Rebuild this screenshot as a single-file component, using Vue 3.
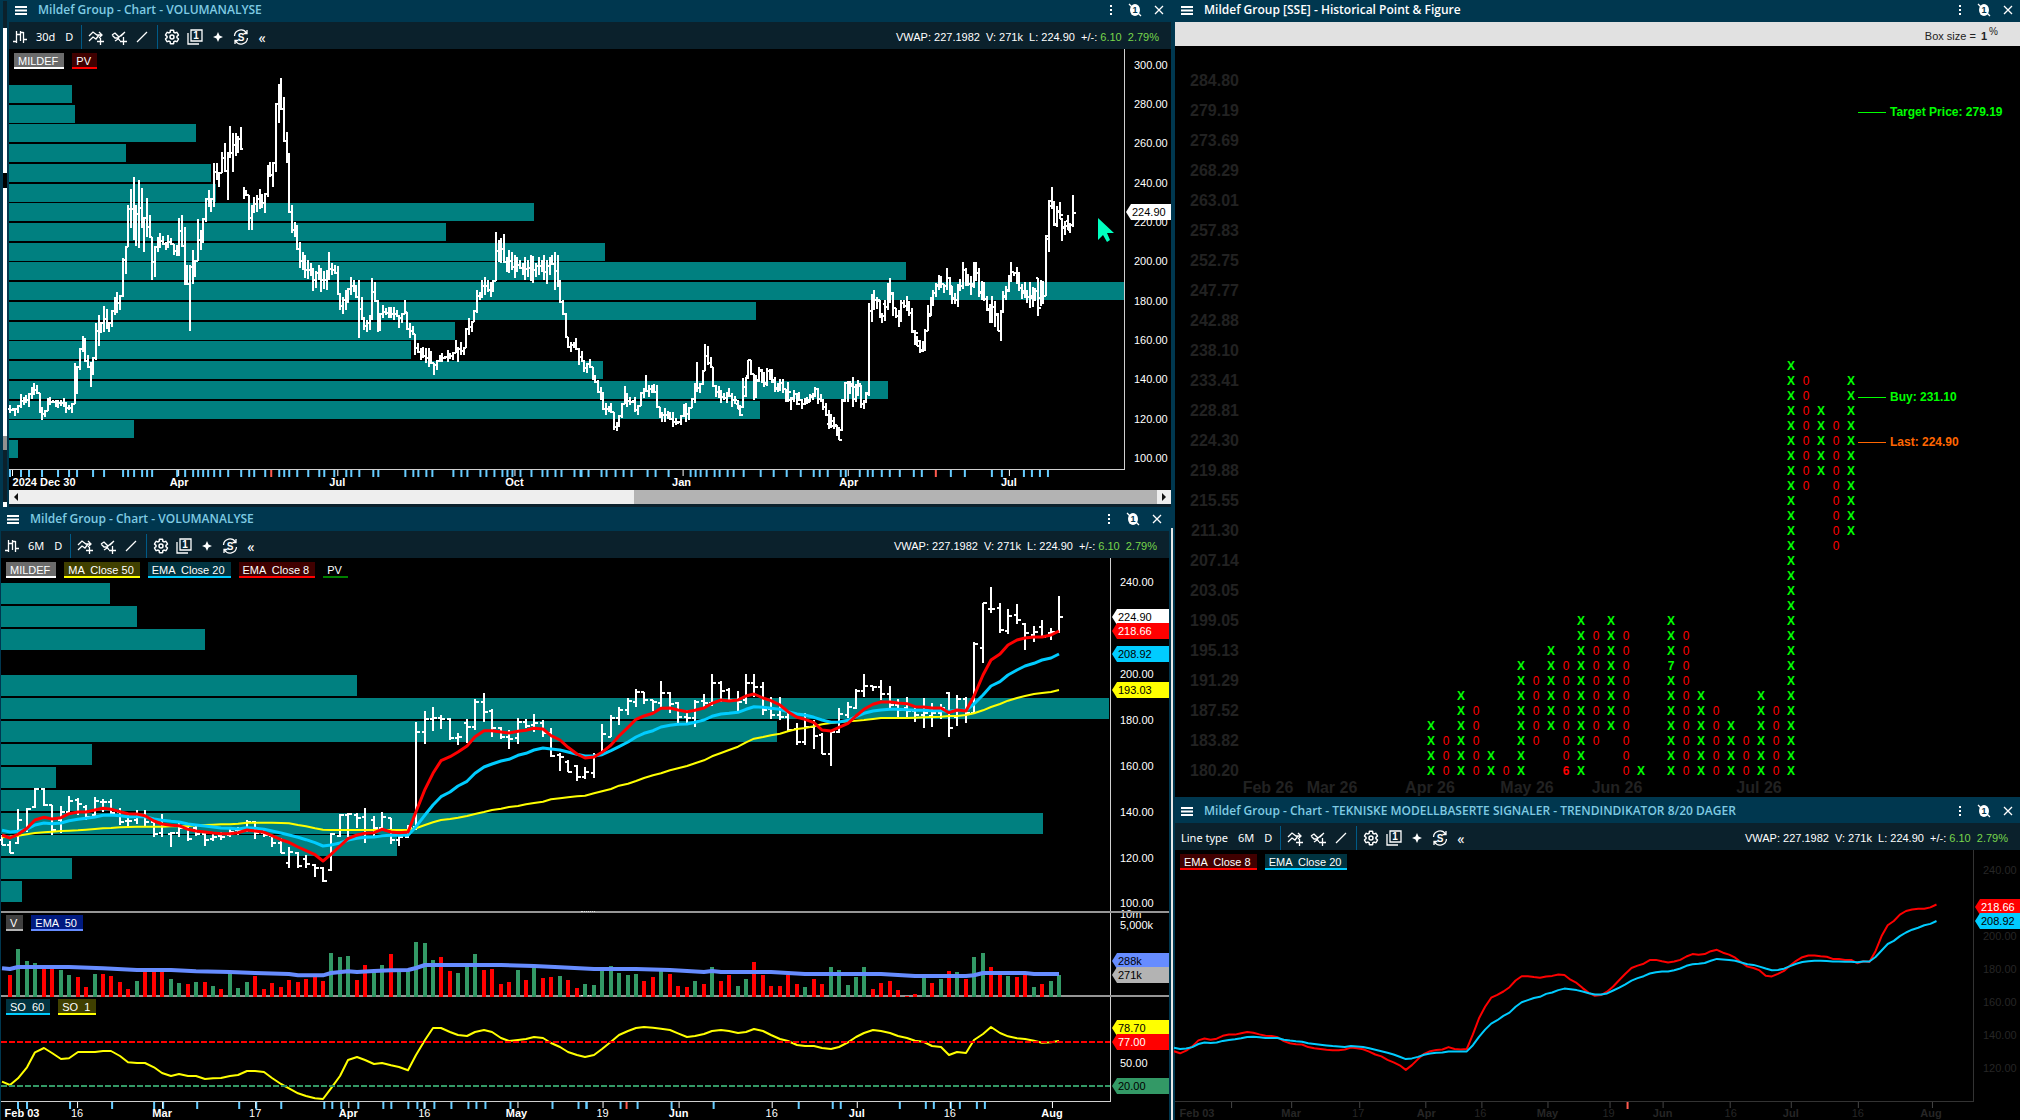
<script setup>
const quote = { vwap: '227.1982', volume: '271k', last: '224.90', change: '6.10', pct: '2.79%' }

const columns = [
  [
    { id: 'history', title: 'Mildef Group - Chart - VOLUMANALYSE', range: '30d' },
    { id: 'half', title: 'Mildef Group - Chart - VOLUMANALYSE', range: '6M' }
  ],
  [
    { id: 'pf', title: 'Mildef Group [SSE] - Historical Point & Figure' },
    { id: 'trend', title: 'Mildef Group - Chart - TEKNISKE MODELLBASERTE SIGNALER - TRENDINDIKATOR 8/20 DAGER', range: '6M', lineType: true }
  ]
]

const nums = (s) => s.trim().split(/\s+/).map(Number)

// ---- raw series, one entry per trading day ----
// high low open close, in sample units
const raw = `1005 1035 1020 1035,1022 1060 1035 1058,928 1032 1030 960,925 995 990 927,865 925 922 866,865 918 866 915,915 1005 915 990,918 998 960 937,888 940 935 902,895 945 900 912,
915 960 920 950,892 955 945 903,898 935 905 907,898 945 907 940,925 975 935 965,945 978 962 963,930 972 960 945,930 980 945 965,965 1010 965 1003,942 1012 1000 975,
995 1040 1003 1000,968 1012 998 985,980 1022 985 1018,975 1008 985 1003,1000 1037 1003 1020,998 1022 1018 1010,995 1020 1008 1010,982 1010 1005 995,980 1005 990 992,960 995 985 965,
962 1018 965 1000,985 1012 1000 1005,1005 1040 1008 1030,1015 1060 1030 1058,1040 1105 1090 1057,1057 1103 1060 1097,1065 1105 1078 1092,1092 1132 1095 1105,1100 1145 1105 1143,1000 1112 1110 1003,
942 1010 1008 945,938 1010 945 942,938 985 945 955,925 1028 950 1000,948 1010 960 985,935 990 985 950,953 1032 955 1020,1005 1037 1020 1010,975 1015 1010 985,667 990 980 695,
633 732 695 657,622 692 657 655,645 686 655 658,655 720 657 715,700 735 715 712,657 730 668 680,597 690 680 605,580 665 605 635,628 710 632 685,682 717 685 710,
690 748 710 718,655 733 715 665,657 685 665 678,643 695 675 668,660 712 668 700,685 772 700 768,760 812 765 770,780 817 785 815,795 842 797 832,800 838 830 815,
758 833 820 765,672 765 762 703,645 712 710 655,622 675 655 630,595 645 630 603,567 620 605 575,575 612 577 600,600 632 600 605,543 620 608 578,575 638 578 612,
605 668 608 652,630 668 650 655,600 680 655 605,583 625 603 608,522 618 608 550,543 605 550 572,565 605 570 600,573 638 600 605,522 612 600 548,522 590 548 562,
545 645 562 630,590 657 628 645,592 660 645 652,640 695 652 690,668 735 688 725,640 735 727 680,660 748 680 708,700 763 705 762,690 797 762 697,625 698 697 642,
607 655 645 622,567 628 625 572,522 592 572 557,557 572 557 562,540 600 562 582,557 625 582 615,598 653 615 630,592 650 625 632,622 665 632 645,593 683 645 640,
610 680 648 640,612 658 640 625,577 710 580 685,585 678 650 597,590 670 597 640,427 642 640 433,308 488 443 310,262 338 328 327,310 398 325 390,327 402 392 348,
312 372 345 360,370 450 373 400,378 427 405 397,360 412 380 412,385 420 400 395,288 400 395 350`.split(',').map(nums)

const ema8 = nums(`1005 1014 1003 985 960 952 957 953 941 936 936 930 925 928 935 941 942 947 963 972 976 977 988 993 996 999 1001 1001 998 990
993 997 1007 1019 1027 1041 1052 1064 1083 1063 1038 1016 1005 1000 998 988 996 998 996 935 868 820 782 770 756 738 710 692 692 696
699 694 691 685 687 707 720 742 762 774 771 757 735 708 682 658 648 640 625 624 630 635 631 624 610 600 603 600 588 582
594 602 615 635 652 658 668 690 693 682 670 648 628 613 606 606 609 611 620 621 624 624 638 630 633 588 525 480 462 435
420 414 411 411 405 393`)
const ema20 = nums(`991 996 994 988 975 969 971 969 962 958 955 951 946 945 947 950 950 950 957 961 964 966 972 975 978 981 984 985 987 983
985 988 993 999 1005 1012 1019 1028 1038 1035 1029 1020 1015 1012 1011 1007 1006 1006 1006 980 945 915 890 876 858 844 820 801 792 783
778 766 760 750 744 747 750 756 763 768 768 764 752 740 726 711 700 692 681 676 673 672 667 660 649 642 640 637 628 620
622 625 628 635 642 645 652 660 667 666 661 650 640 633 630 628 628 629 631 631 632 632 634 631 631 612 585 558 545 525
510 498 490 480 474 462`)
const ma50 = nums(`1012 1010 1007 1003 999 997 995 993 992 991 989 987 985 984 982 981 980 980 980 980 979 979 978 976 975 974 973 973 971 968
968 968 968 969 970 975 979 985 989 990 990 990 990 990 990 990 990 990 990 985 975 967 960 957 953 948 942 936 930 926
921 918 913 909 905 898 895 892 889 887 880 874 867 857 851 843 834 826 820 811 805 798 790 781 769 759 750 740 727 716
711 706 701 694 687 684 679 673 669 666 664 662 660 657 654 654 654 654 653 652 651 650 648 648 645 640 631 621 612 602
594 588 582 579 576 570`)
const stochastic = nums(`545 555 535 502 457 444 459 477 475 456 456 456 453 453 468 487 489 489 502 519 528 522 528 528 537 535 534 528 525 513
513 516 534 552 565 580 588 595 597 565 528 480 471 480 492 489 496 501 511 465 420 384 384 396 405 408 396 390 396 414
423 420 417 411 414 429 441 456 465 471 465 447 425 405 393 384 381 383 386 390 400 411 408 402 393 390 393 399 396 387
393 405 417 423 435 438 438 444 447 441 427 411 399 390 393 399 408 414 422 426 438 441 465 456 459 420 402 381 399 409
415 417 422 428 427 423`)
const volumes = `r225 g147 g183 g189 r203 r205 g210 g225 r231 r261 g222 r222 r228 r246 r267 g243 r213 r213 r213 g237 g249 r252 g246 r246 g258 r267 g222 g264 g246 r228
r267 r249 r261 r240 r246 r237 r231 r243 g159 g171 g168 r240 r195 g213 g195 r162 g213 g213 g126 g129 g180 r171 r213 g219 g200 g162 r210 r207 r252 r246
g210 r240 g203 r234 r231 g228 r240 r264 g252 g255 g207 g198 g219 g225 g222 r243 r231 g213 r222 r258 r261 g243 r252 g201 r243 r225 g258 g237 r186 r225
r258 r258 r225 r252 g261 r237 r252 g201 g210 g255 g231 g201 r267 r249 r243 r270 r288 r282 g233 r249 g237 r213 g216 r237 g171 g159 r201 r225 g228 r231
r225 g261 r252 g243 g225`.trim().split(/\s+/)
const volumeEma = [[0, 205], [1, 207], [2, 201], [8, 201], [12, 205], [16, 210], [20, 210], [23, 214], [27, 216], [30, 219], [34, 222], [35, 226], [38, 226], [39, 219], [41, 214], [42, 216], [44, 213], [46, 211], [48, 210], [49, 204], [50, 195], [59, 195], [63, 198], [66, 202], [70, 207], [75, 207], [79, 210], [83, 216], [84, 213], [85, 216], [91, 216], [95, 222], [104, 222], [108, 228], [114, 228], [115, 226], [116, 219], [121, 219], [122, 222], [125, 222]]

// earlier part of the long chart: position, high, low
const earlier = [
  `26 405 413,42 408 416,50 405 413,58 394 408,66 395 403,78 393 407,86 387 399,92 383 395,100 385 394,106 393 413,115 407 420,125 398 407,136 397 405,143 400 407,150 400 408,158 400 406,165 398 407,178 402 413,190 403 413,197 363 397,207 348 370,216 336 352,222 338 362,230 355 368,236 362 387,243 357 375,249 323 360,256 315 346,266 322 333,276 306 332,286 322 332,295 310 327,302 297 315,311 292 313,318 258 297,326 246 274,332 205 245,340 189 228,348 177 240,354 205 246,361 180 248,368 188 228,374 217 252,381 198 237,388 215 238,395 227 258,401 243 280,412 237 252,423 233 248,434 242 250,443 235 248,452 247 255,460 245 256,466 218 256,473 215 247,481 227 285,487 265 285,494 265 331,500 250 284,507 260 277,514 219 252,521 230 250,528 218 243,535 198 222,543 190 207,551 198 212,557 163 207,564 163 180,571 172 187,578 152 172,586 143 172,593 152 200,599 126 158,606 133 172,612 132 150,619 133 156,628 127 150,633 170 200,640 187 199,648 197 230,655 205 230,662 197 213,670 195 212,677 189 209,683 194 208,690 193 213,698 165 197,706 162 177,713 162 187,720 103 172,726 84 123,732 78 110,738 97 142,746 132 163,752 153 213,760 205 233,768 222 237,774 225 250,782 242 268,790 252 270,800 255 278,808 260 279,820 268 291,832 265 280,845 268 292,852 270 290,859 252 280,866 263 275,875 265 274,881 266 295,888 293 310,894 297 314,903 290 310,912 288 303,922 277 295,930 285 298,937 280 338,945 297 320,953 317 330,960 320 332,968 315 330,975 278 320,982 282 302,988 300 332,996 313 331,1005 305 318,1015 307 318,1025 307 318,1033 307 320,1043 315 328,1052 313 323,1060 300 313,1067 315 330,1075 323 338,1083 338 355,1090 343 353,1098 348 360,1107 347 358,1116 348 363,1124 348 367,1132 363 375,1140 360 370,1150 355 362,1160 353 362,1172 350 362,1182 352 360,1189 340 353,1197 347 362,1206 342 355,1215 347 355,1221 328 347,1230 318 335,1238 310 322,1245 290 313,1253 292 300,1260 280 298,1272 277 295,1280 282 297,1288 280 292,1294 232 280,1301 240 262,1307 238 263,1314 234 263,1322 257 272,1330 250 273,1338 252 270,1345 255 278,1355 257 272,1366 263 275,1375 257 280,1385 255 281,1393 256 283,1403 263 277,1413 257 275,1420 255 280,1428 260 284,1436 257 275,1445 255 265,1455 252 290,1462 280 303,1470 300 315,1477 313 338,1484 338 348,1492 342 352,1500 342 348,1508 338 350,1517 348 365,1527 360 372,1535 363 373,1540 359 368,1548 367 380,1557 375 383,1565 380 393`,
  `54 387 400,62 392 410,72 403 415,80 403 413,88 412 430,94 422 431,100 415 427,108 403 418,115 386 402,121 386 395,125 393 407,133 397 405,143 397 412,150 405 415,160 392 402,166 388 398,172 375 392,178 385 397,187 385 393,196 384 393,203 385 408,208 407 418,218 412 422,226 408 422,236 412 420,246 412 427,254 418 425,263 415 425,270 404 417,277 403 422,286 407 420,294 398 408,300 383 403,308 362 392,316 383 393,320 370 385,327 344 365,335 346 365,341 357 368,348 367 387,356 385 397,364 386 398,374 390 403,384 392 403,392 388 397,400 393 407,410 400 413`
]
const waypoints = earlier.flatMap((part, n) => part.split(',').map((row) => {
  const [x, hi, lo] = nums(row)
  return { x: n * 580 + x / 2.613, hi, lo }
}))

// ---- scales ----
const price = (v) => 276.17 - v * 0.14524
const yHistory = (p) => 85 + (290 - p) * 1.972
const yTrend = (p) => 870 + (240 - p) * 1.65
const xHalf = (i) => Math.round(1.5 + i * 8.46)
const yHalf = (v) => Math.round(500 + v / 3)
const yLow = (v) => 900 + v / 3

function line(values, x, y) {
  return values.map((v, i) => `${x(i).toFixed(1)},${y(v).toFixed(1)}`).join(' ')
}

const halfBars = raw.map(([hi, lo, open, close], i) => {
  const x = xHalf(i)
  return `M${x} ${yHalf(hi)}V${yHalf(lo)}M${x - 3} ${yHalf(open)}H${x}M${x} ${yHalf(close)}H${x + 4}`
}).join('')

const historyBars = (() => {
  const step = 2.684
  const days = []
  let previous = null
  for (let k = 0; k < 271; k++) {
    const x = 10.1 + k * step
    let near = waypoints[0]
    for (const w of waypoints) if (Math.abs(w.x - x) < Math.abs(near.x - x)) near = w
    const shift = near === previous ? 3 : 0
    previous = near
    days.push({ x: Math.round(x), hi: near.hi + shift, lo: Math.max(near.lo - shift, near.hi + shift + 3) })
  }
  let d = ''
  let open = 409
  days.forEach((day, k) => {
    const next = days[k + 1] || day
    const target = (next.hi + next.lo) / 2
    const close = Math.round(Math.min(Math.max(target, day.hi + 1), day.lo - 1))
    const gap = Math.max(day.hi - open, open - day.lo)
    const hi = gap < 12 ? Math.min(day.hi, open) : day.hi
    const lo = gap < 12 ? Math.max(day.lo, open) : day.lo
    d += `M${day.x} ${hi}V${lo}`
    if (gap < 12) d += `M${day.x - 2} ${open}h2`
    d += `M${day.x} ${close}h2`
    open = close
  })
  raw.forEach(([hi, lo, first, close], i) => {
    const x = Math.round(737.5 + i * step)
    const y = (v) => Math.round(yHistory(price(v)))
    d += `M${x} ${y(hi)}V${y(lo)}M${x - 2} ${y(first)}h2M${x} ${y(close)}h3`
  })
  return d
})()

const halfLines = {
  ma50: line(ma50, xHalf, (v) => 500 + v / 3),
  ema20: line(ema20, xHalf, (v) => 500 + v / 3),
  ema8: line(ema8, xHalf, (v) => 500 + v / 3)
}
const xTrend = (i) => 1174 + i * 6.1
const trendLines = {
  ema8: line(ema8, xTrend, (v) => yTrend(price(v))),
  ema20: line(ema20, xTrend, (v) => yTrend(price(v)))
}
const stochasticLine = line(stochastic, xHalf, yLow)
const volumeLine = volumeEma.map(([i, v]) => `${xHalf(i)},${yLow(v).toFixed(1)}`).join(' ')
const volumeBars = volumes.map((v, i) => ({
  x: xHalf(i + 1) - 2,
  y: Math.round(yLow(Number(v.slice(1)))),
  up: v[0] === 'g'
}))

// volume profile, one row per 10 of price from the top; the value is the right edge
const historyProfile = nums('72 75 196 126 211 216 534 446 605 906 1124 756 455 411 603 888 760 134 18')
  .map((w, i) => ({ w: w - 9, y: Math.round(85 + i * 19.72) }))
const halfProfile = nums('110 137 205 0 357 1109 777 92 56 300 1043 397 72 22')
  .map((w, i) => ({ w: Math.max(w - 1, 0), y: Math.round(583 + i * 22.95) }))

// ---- axes ----
const ticks = (s, from = 0) => nums(s).map((z) => Math.round(from + z / 2.613))
const historyTicks = {
  minor: [
    ...ticks('26 54 76 110 152 181 202 243 271 321 334 350 371 384 397 463 484 504 517 530 543 560 575 596 630 650 663 692 730 743 756 777 806 834 847 873 905 918 938 975 988 1058 1078 1092 1113 1129 1184 1205 1220 1255 1270 1292 1311 1325 1338 1360 1387 1416 1430 1450 1466 1500 1515'),
    ...ticks('2 21 54 68 91 112 133 175 196 230 287 300 313 330 350 363 384 399 426 470 504 538 575 609 624 645 680 693 730 750 763 787 807 834 870 891 967 1003 1074 1101 1158 1178 1199 1220', 580)
  ],
  major: [12, 178, 337, 514, 682, 847, 1008],
  red: [271, 935]
}
const halfTicks = {
  minor: [
    ...ticks('48 70 182 292 402 426 515 624 669 734 846 867 891 935 1001 1021 1066 1090 1108 1134 1178 1222 1244 1267 1332 1442 1510 1531'),
    ...ticks('15 104 148 237 347 569 658 679 833 901 922 966 990 1034 1055', 580)
  ],
  major: [77, 162, 255, 348, 424, 517, 602, 678, 771, 856, 949, 1051],
  red: [626]
}
const trendTicks = { minor: [], major: [1231, 1291, 1359, 1425, 1481, 1547, 1609, 1662, 1729, 1790, 1857, 1931], red: [1627] }

const months = (pairs) => pairs.map(([text, x]) => ({ text, x, bold: !/^\d+$/.test(text) }))
const axes = {
  history: {
    ticks: historyTicks,
    x0: 9,
    w: 1115,
    labels: months([['2024 Dec 30', 44], ['Apr', 179], ['Jul', 337], ['Oct', 514], ['Jan', 681], ['Apr', 848], ['Jul', 1008]])
  },
  half: {
    ticks: halfTicks,
    x0: 1,
    w: 1109,
    labels: months([['Feb 03', 22], ['16', 77], ['Mar', 162], ['17', 255], ['Apr', 348], ['16', 424], ['May', 516], ['19', 602], ['Jun', 678], ['16', 771], ['Jul', 856], ['16', 949], ['Aug', 1051]])
  },
  trend: {
    ticks: trendTicks,
    x0: 1175,
    w: 798,
    labels: months([['Feb 03', 1197], ['Mar', 1291], ['17', 1358], ['Apr', 1426], ['16', 1480], ['May', 1547], ['19', 1608], ['Jun', 1662], ['16', 1730], ['Jul', 1790], ['16', 1857], ['Aug', 1930]])
  }
}

const panes = {
  history: [{
    id: 'historyPrice', x: 9, w: 1115, y: 49, h: 420,
    legend: [['MILDEF', 'white'], ['PV', 'red']],
    labels: [['300.00', 65], ['280.00', 104], ['260.00', 143], ['240.00', 183], ['220.00', 222], ['200.00', 261], ['180.00', 301], ['160.00', 340], ['140.00', 379], ['120.00', 419], ['100.00', 458]],
    tags: [['224.90', 212, 'white']]
  }],
  half: [
    {
      id: 'halfPrice', x: 1, w: 1109, y: 558, h: 353,
      legend: [['MILDEF', 'white'], ['MA  Close 50', 'yellow'], ['EMA  Close 20', 'cyan'], ['EMA  Close 8', 'red'], ['PV', 'green']],
      labels: [['240.00', 582], ['200.00', 674], ['180.00', 720], ['160.00', 766], ['140.00', 812], ['120.00', 858], ['100.00', 903]],
      tags: [['224.90', 617, 'white'], ['218.66', 631, 'red'], ['208.92', 654, 'cyan'], ['193.03', 690, 'yellow']]
    },
    {
      id: 'volume', x: 1, w: 1109, y: 911, h: 84,
      legend: [['V', 'grey'], ['EMA  50', 'blue']],
      labels: [['10m', 914], ['5,000k', 925]],
      tags: [['288k', 961, 'blue'], ['271k', 975, 'grey']]
    },
    {
      id: 'stochastic', x: 1, w: 1109, y: 995, h: 106,
      legend: [['SO  60', 'cyan'], ['SO  1', 'yellow']],
      labels: [['100.00', 1024], ['50.00', 1063]],
      tags: [['78.70', 1028, 'yellow'], ['77.00', 1042, 'red'], ['20.00', 1086, 'seagreen']]
    }
  ],
  trend: [{
    id: 'trendPrice', x: 1175, w: 798, y: 850, h: 251,
    legend: [['EMA  Close 8', 'red'], ['EMA  Close 20', 'cyan']],
    labels: [['240.00', 870], ['200.00', 936], ['180.00', 969], ['160.00', 1002], ['140.00', 1035], ['120.00', 1068]],
    tags: [['218.66', 907, 'red'], ['208.92', 921, 'cyan']]
  }]
}

const pct = (v, from, size) => `${(((v - from) / size) * 100).toFixed(3)}%`

// ---- point & figure ----
const pfLabels = ['284.80', '279.19', '273.69', '268.29', '263.01', '257.83', '252.75', '247.77', '242.88', '238.10', '233.41', '228.81', '224.30', '219.88', '215.55', '211.30', '207.14', '203.05', '199.05', '195.13', '191.29', '187.52', '183.82', '180.20']
// column, symbol, lowest row, highest row
const pfColumns = [
  [0, 'X', 0, 3], [1, '0', 0, 2], [2, 'X', 0, 5], [3, '0', 0, 4], [4, 'X', 0, 1], [5, '0', 0, 0], [6, 'X', 0, 7],
  [7, '0', 2, 6], [8, 'X', 3, 8], [9, '0', 0, 7], [10, 'X', 0, 10], [11, '0', 2, 9], [12, 'X', 3, 10], [13, '0', 0, 9],
  [14, 'X', 0, 0], [16, 'X', 0, 10], [17, '0', 0, 9], [18, 'X', 0, 5], [19, '0', 0, 4], [20, 'X', 0, 3], [21, '0', 0, 2],
  [22, 'X', 0, 5], [23, '0', 0, 4], [24, 'X', 0, 27], [25, '0', 19, 26], [26, 'X', 20, 24], [27, '0', 15, 23], [28, 'X', 16, 26]
]
const monthMarks = { '9-0': '6', '16-7': '7' }
const pfCells = pfColumns.flatMap(([col, symbol, low, high]) => {
  const cells = []
  for (let row = low; row <= high; row++) {
    const mark = monthMarks[`${col}-${row}`]
    cells.push({ key: `${col}-${row}`, x: 1431 + col * 15, y: 775 - row * 15, text: mark || symbol, up: symbol === 'X', bold: symbol === 'X' || !!mark })
  }
  return cells
})
const pfMonths = [['Feb 26', 1268], ['Mar 26', 1332], ['Apr 26', 1430], ['May 26', 1527], ['Jun 26', 1617], ['Jul 26', 1759]]
const pfSignals = [['Target Price: 279.19', 112, 'up'], ['Buy: 231.10', 397, 'up'], ['Last: 224.90', 442, 'last']]
</script>

<template>
  <main class="workspace">
    <div v-for="(column, c) in columns" :key="c" class="column" :class="c ? 'right' : 'left'">
      <section v-for="panel in column" :key="panel.id" class="panel" :class="panel.id">
        <div v-if="panel.id === 'history'" class="edge" aria-hidden="true">
          <i class="seg dark first"></i><i class="seg light second"></i><i class="seg black third"></i><i class="seg light fourth"></i><i class="seg grey fifth"></i><i class="seg dark sixth"></i><i class="seg light last"></i>
        </div>
        <header class="titlebar">
          <button class="icon-btn menu" aria-label="Menu">
            <svg width="12" height="9" viewBox="0 0 12 9"><path d="M0 1h12M0 4.500h12M0 8h12" /></svg>
          </button>
          <h2>{{ panel.title }}</h2>
          <button class="icon-btn" aria-label="More">
            <svg width="16" height="16" viewBox="0 0 16 16"><path class="solid" d="M7 3h2v2H7zM7 7h2v2H7zM7 11h2v2H7z" /></svg>
          </button>
          <button class="icon-btn" aria-label="Link group 1">
            <svg width="16" height="16" viewBox="0 0 16 16">
              <path d="M2 2l3 3M11 11l3 3" />
              <ellipse class="solid" cx="8" cy="8" rx="5" ry="6" />
              <text class="cut" x="8" y="11">1</text>
            </svg>
          </button>
          <button class="icon-btn" aria-label="Close">
            <svg width="16" height="16" viewBox="0 0 16 16"><path d="M4 4l8 8M12 4l-8 8" /></svg>
          </button>
        </header>

        <template v-if="panel.id === 'pf'">
          <div class="boxsize">Box size = <b>1</b><sup>%</sup></div>
          <svg class="pf-chart" viewBox="1175 46 845 751" preserveAspectRatio="xMinYMin meet">
            <text v-for="(label, i) in pfLabels" :key="label" class="pf-label end" x="1239" :y="86 + i * 30">{{ label }}</text>
            <text v-for="m in pfMonths" :key="m[0]" class="pf-label mid" :x="m[1]" y="793">{{ m[0] }}</text>
            <text v-for="cell in pfCells" :key="cell.key" class="pf-cell" :class="{ up: cell.up, bold: cell.bold }" :x="cell.x" :y="cell.y">{{ cell.text }}</text>
            <g v-for="s in pfSignals" :key="s[0]" class="signal" :class="s[2]">
              <path :d="`M1858 ${s[1]}h28`" />
              <text x="1890" :y="s[1] + 4">{{ s[0] }}</text>
            </g>
          </svg>
        </template>

        <template v-else>
          <div class="toolbar">
            <button v-if="panel.lineType" class="text-btn">Line type</button>
            <button v-else class="icon-btn bar-type" aria-label="Bar type">
              <svg width="14" height="16" viewBox="0 0 14 16"><path d="M0 12.500h3M3.500 2v12M4 5.500h3.500M7.500 2v10M10.500 3v11M8 3.500h2.500M10.500 10.500H14" /></svg>
            </button>
            <button class="text-btn">{{ panel.range }}</button>
            <button class="text-btn">D</button>
            <span class="sep"></span>
            <button class="icon-btn" aria-label="Add indicator">
              <svg width="16" height="16" viewBox="0 0 16 16"><path d="M1 7l4-4 4 3h5M11 3l3 3-3 3M1 12l4-4 3 2 3-4M12.500 9v7M9 12.500h7" /></svg>
            </button>
            <button class="icon-btn" aria-label="Compare">
              <svg width="16" height="16" viewBox="0 0 16 16"><path d="M1 6l3-2 4 4 6-5M1 6l3 3h3l2 3M4 12l3-2M12.500 8v8M9 12.500h7M10 7l3-3" /></svg>
            </button>
            <button class="icon-btn" aria-label="Draw line">
              <svg width="16" height="16" viewBox="0 0 16 16"><path d="M3 13L13 3" /></svg>
            </button>
            <span class="sep"></span>
            <button class="icon-btn" aria-label="Settings">
              <svg width="16" height="16" viewBox="0 0 24 24" class="wide">
                <path d="M19.430 12.980c.04-.32.07-.64.07-.98s-.03-.66-.07-.98l2.110-1.650c.19-.15.24-.42.12-.64l-2-3.460c-.12-.22-.39-.3-.61-.22l-2.490 1c-.52-.4-1.080-.73-1.690-.98l-.38-2.650C14.460 2.180 14.250 2 14 2h-4c-.25 0-.46.18-.49.42l-.38 2.650c-.61.25-1.170.59-1.690.98l-2.490-1c-.23-.09-.49 0-.61.22l-2 3.460c-.13.22-.07.49.12.64l2.110 1.650c-.04.32-.07.65-.07.98s.03.66.07.98l-2.110 1.650c-.19.15-.24.42-.12.64l2 3.460c.12.22.39.3.61.22l2.490-1c.52.4 1.080.73 1.690.98l.38 2.650c.03.24.24.42.49.42h4c.25 0 .46-.18.49-.42l.38-2.650c.61-.25 1.170-.59 1.690-.98l2.490 1c.23.09.49 0 .61-.22l2-3.460c.12-.22.07-.49-.12-.64z" />
                <circle cx="12" cy="12" r="3" />
              </svg>
            </button>
            <button class="icon-btn" aria-label="Windows">
              <svg width="16" height="16" viewBox="0 0 16 16">
                <path d="M4 1h11v11H4zM1 4v11h11" />
                <text class="glyph" x="9" y="10">1</text>
              </svg>
            </button>
            <button class="icon-btn" aria-label="Highlight">
              <svg width="16" height="16" viewBox="0 0 16 16"><path class="solid" d="M8 3l1.500 3.500L13 8l-3.500 1.500L8 13l-1.500-3.500L3 8l3.500-1.500z" /></svg>
            </button>
            <button class="icon-btn" aria-label="Currency">
              <svg width="16" height="16" viewBox="0 0 16 16">
                <path d="M1.500 7A6.500 6.500 0 0 1 13.500 4M14.500 9A6.500 6.500 0 0 1 2.500 12M14 1v3.500h-3.500M2 15v-3.500h3.500" />
                <text class="glyph" x="8" y="12">S</text>
              </svg>
            </button>
            <button class="text-btn collapse" aria-label="Collapse">«</button>
            <p class="quote">VWAP: {{ quote.vwap }}&nbsp; V: {{ quote.volume }}&nbsp; L: {{ quote.last }}&nbsp; +/-: <span>{{ quote.change }}&nbsp; {{ quote.pct }}</span></p>
          </div>

          <div class="panes">
            <div v-for="pane in panes[panel.id]" :key="pane.id" class="pane" :style="{ flexGrow: pane.h }">
              <div class="plot">
                <svg :viewBox="`${pane.x} ${pane.y} ${pane.w} ${pane.h}`" preserveAspectRatio="none">
                  <template v-if="pane.id === 'historyPrice'">
                    <rect v-for="row in historyProfile" :key="row.y" class="profile" x="9" :y="row.y" :width="row.w" height="18" />
                    <path class="bars" :d="historyBars" />
                    <path class="pointer" d="M1098 218v22l5-5 4 7 3-2-3-7h7z" />
                  </template>
                  <template v-else-if="pane.id === 'halfPrice'">
                    <rect v-for="row in halfProfile" :key="row.y" class="profile" x="1" :y="row.y" :width="row.w" height="21" />
                    <path class="bars" :d="halfBars" />
                    <polyline class="stroke yellow thin" :points="halfLines.ma50" />
                    <polyline class="stroke cyan" :points="halfLines.ema20" />
                    <polyline class="stroke red" :points="halfLines.ema8" />
                  </template>
                  <template v-else-if="pane.id === 'volume'">
                    <rect v-for="bar in volumeBars" :key="bar.x" class="vol" :class="{ up: bar.up }" :x="bar.x" :y="bar.y" width="4" :height="997 - bar.y" />
                    <polyline class="stroke blue thick" :points="volumeLine" />
                  </template>
                  <template v-else-if="pane.id === 'stochastic'">
                    <polyline class="stroke yellow thin" :points="stochasticLine" />
                    <path class="limit upper" d="M1 1042H1110" />
                    <path class="limit lower" d="M1 1086H1110" />
                  </template>
                  <template v-else>
                    <polyline class="stroke red thin" :points="trendLines.ema8" />
                    <polyline class="stroke cyan thin" :points="trendLines.ema20" />
                  </template>
                </svg>
                <div class="legend">
                  <button v-for="item in pane.legend" :key="item[0]" class="chip" :class="item[1]">{{ item[0] }}</button>
                </div>
              </div>
              <div class="yaxis">
                <span v-for="label in pane.labels" :key="label[0]" class="ylabel" :style="{ top: pct(label[1], pane.y, pane.h) }">{{ label[0] }}</span>
                <span v-for="tag in pane.tags" :key="tag[0]" class="tag" :class="tag[2]" :style="{ top: pct(tag[1], pane.y, pane.h) }">{{ tag[0] }}</span>
              </div>
            </div>
            <div class="xaxis">
              <svg :viewBox="`${axes[panel.id].x0} 0 ${axes[panel.id].w} 7`" preserveAspectRatio="none">
                <rect v-for="x in axes[panel.id].ticks.minor" :key="'n' + x" class="minor" :x="x - 1" y="0" width="2" height="7" />
                <rect v-for="x in axes[panel.id].ticks.major" :key="'j' + x" class="major" :x="x" y="0" width="1" height="6" />
                <rect v-for="x in axes[panel.id].ticks.red" :key="'r' + x" class="mark" :x="x - 1" y="0" width="2" height="7" />
              </svg>
              <span v-for="label in axes[panel.id].labels" :key="label.x" class="xlabel" :class="{ bold: label.bold }" :style="{ left: pct(label.x, axes[panel.id].x0, axes[panel.id].w) }">{{ label.text }}</span>
            </div>
          </div>

          <div v-if="panel.id === 'history'" class="scroller">
            <button class="arrow" aria-label="Scroll left"><svg width="14" height="14" viewBox="0 0 14 14"><path d="M9 3v8L5 7z" /></svg></button>
            <span class="track"></span>
            <span class="thumb"></span>
            <button class="arrow" aria-label="Scroll right"><svg width="14" height="14" viewBox="0 0 14 14"><path d="M5 3v8l4-4z" /></svg></button>
          </div>
        </template>
      </section>
    </div>
  </main>
</template>

<style>
body {
  margin: 0;
  background: #00374f;
}
</style>

<style scoped>
.workspace {
  display: flex;
  min-height: 100vh;
  background: #00374f;
  color: #fff;
  font-family: "Liberation Sans", Arial, sans-serif;
  font-size: 11px;
  overflow: hidden;
}

.column {
  display: flex;
  flex-direction: column;
  min-width: 0;
}

.column.left { flex: 1175 1 0; }
.column.right { flex: 845 1 0; }

.panel {
  position: relative;
  display: flex;
  flex-direction: column;
  min-height: 0;
  box-sizing: border-box;
}

.history { flex: 504 1 0; padding: 0 4px 3px 9px; }
.half { flex: 613 1 0; padding: 0 6px 0 1px; }
.pf { flex: 797 1 0; }
.trend { flex: 323 1 0; }

.history::after {
  content: "";
  position: absolute;
  right: 4px;
  bottom: 0;
  left: 9px;
  height: 3px;
  background: #0b212c;
}

.half::after {
  content: "";
  position: absolute;
  top: 21px;
  right: 2px;
  bottom: 0;
  width: 2px;
  background: #e8e8e8;
}

/* neighbouring window's edge, left of the first chart */
.edge {
  position: absolute;
  top: 1px;
  bottom: 0;
  left: 3px;
  width: 4px;
  display: flex;
  flex-direction: column;
}

.seg { display: block; }
.seg.dark { background: #0b212c; }
.seg.light { background: #fff; }
.seg.black { background: #000; }
.seg.grey { background: #919191; }
.seg.first { flex: 27; }
.seg.second { flex: 145; }
.seg.third { flex: 15; }
.seg.fourth { flex: 248; }
.seg.fifth { flex: 14; }
.seg.sixth { flex: 52; }
.seg.last { flex: 5; }

button {
  margin: 0;
  padding: 0;
  border: 0;
  background: none;
  color: inherit;
  font: inherit;
  cursor: pointer;
}

.titlebar {
  display: flex;
  align-items: center;
  flex: none;
  gap: 8px;
  height: 22px;
  padding: 0 4px 2px 6px;
  box-sizing: border-box;
}

.half .titlebar { height: 24px; padding-bottom: 0; }
.trend .titlebar { height: 26px; padding-top: 2px; padding-bottom: 0; }

.titlebar h2 {
  flex: 1;
  margin: 0 0 0 3px;
  overflow: hidden;
  color: #7fcbe3;
  font-family: "Open Sans", "Noto Sans", sans-serif;
  font-size: 12px;
  font-weight: 600;
  line-height: 16px;
  white-space: nowrap;
}

.pf h2 { color: #fff; }

.icon-btn {
  display: flex;
  align-items: center;
  justify-content: center;
  flex: none;
  width: 16px;
  height: 16px;
}

.icon-btn.menu { width: 12px; }
.icon-btn.bar-type { width: 14px; }

.icon-btn svg {
  flex: none;
  fill: none;
  stroke: #fff;
  stroke-width: 1.3;
}

.icon-btn svg.wide { stroke-width: 2.2; }
.icon-btn.menu svg { stroke-width: 2; }
.icon-btn .solid { fill: #fff; stroke: none; }

.cut,
.glyph {
  stroke: none;
  font-size: 10px;
  font-weight: bold;
  text-anchor: middle;
}

.cut { fill: #00374f; font-size: 9px; }
.glyph { fill: #fff; }

.toolbar {
  display: flex;
  align-items: center;
  flex: none;
  gap: 7px;
  height: 27px;
  padding: 2px 12px 0 4px;
  box-sizing: border-box;
  background: #0b212c;
}

.text-btn {
  margin-right: 1px;
  padding-left: 2px;
  font-family: "Noto Sans", sans-serif;
  font-size: 11px;
  line-height: 16px;
}

.text-btn.collapse {
  padding: 3px 0 0 2px;
  font-size: 14px;
}

.sep {
  align-self: flex-end;
  width: 1px;
  height: 24px;
  margin-right: -1px;
  background: #005a87;
}

.quote {
  margin: 0 0 0 auto;
  white-space: nowrap;
}

.quote span { color: #78d64b; }

.panes {
  flex: 1;
  display: flex;
  flex-direction: column;
  min-height: 0;
  background: #000;
}

.pane {
  position: relative;
  display: flex;
  flex-basis: 0;
  min-height: 0;
}

.pane + .pane::before {
  content: "";
  position: absolute;
  z-index: 1;
  top: 0;
  left: 0;
  right: 0;
  height: 2px;
  background: #969696;
}

.pane + .pane::after {
  content: "";
  position: absolute;
  z-index: 1;
  top: 0;
  left: 50%;
  width: 14px;
  margin-left: -4px;
  border-top: 1px dotted #e0e0e0;
}

.plot {
  position: relative;
  flex: 1;
  min-width: 0;
}

.plot svg {
  position: absolute;
  z-index: 2;
  inset: 0;
  width: 100%;
  height: 100%;
  overflow: visible;
}

.yaxis {
  position: relative;
  flex: none;
  width: 47px;
  box-sizing: border-box;
  border-left: 1px solid #d0d0d0;
}

.half .yaxis { width: 59px; }

.ylabel,
.tag {
  position: absolute;
  height: 10px;
  margin-top: -5px;
  line-height: 10px;
}

.ylabel { left: 9px; }

.tag {
  left: 1px;
  right: 0;
  height: 16px;
  margin-top: -8px;
  padding-left: 6px;
  line-height: 16px;
  color: #000;
  clip-path: polygon(0 50%, 5px 0, 100% 0, 100% 100%, 5px 100%);
}

.tag.white { background: #fff; }
.tag.red { background: #f00; color: #fff; }
.tag.cyan { background: #00ccff; }
.tag.yellow { background: #ff0; }
.tag.blue { background: #668cff; }
.tag.grey { background: #b3b3b3; }
.tag.seagreen { background: #339966; }

.xaxis {
  position: relative;
  flex: none;
  height: 19px;
  margin-right: 46px;
  box-sizing: border-box;
  border-top: 1px solid #d0d0d0;
}

.history .xaxis { height: 21px; }
.half .xaxis { margin-right: 58px; }

.xaxis svg {
  display: block;
  width: 100%;
  height: 7px;
}

.minor { fill: #66ccff; }
.major { fill: #fff; }
.mark { fill: #ff5a4f; }

.xlabel {
  position: absolute;
  bottom: 0;
  width: 80px;
  margin-left: -40px;
  line-height: 14px;
  text-align: center;
}

.history .xlabel { bottom: 1px; }
.xlabel.bold { font-weight: bold; }

.trend .xlabel,
.trend .ylabel { color: #262626; }
.trend .yaxis,
.trend .xaxis { border-color: #333; }
.trend .major { fill: #444; }

.legend {
  position: absolute;
  z-index: 3;
  top: 4px;
  left: 5px;
  display: flex;
  gap: 8px;
}

.chip {
  height: 16px;
  padding: 1px 6px 0 4px;
  border-bottom: 2px solid;
  line-height: 14px;
  white-space: pre;
}

.chip.white { background: #6b6b6b; border-color: #fff; }
.chip.yellow { background: #404000; border-color: #ff0; }
.chip.cyan { background: #003340; border-color: #00ccff; }
.chip.red { background: #400000; border-color: #f00; }
.chip.green { border-color: #008000; }
.chip.grey { background: #404040; border-color: #b3b3b3; }
.chip.blue { background: #001a80; border-color: #668cff; }

.profile { fill: #008080; shape-rendering: crispEdges; }
.bars { fill: none; stroke: #fff; stroke-width: 2; shape-rendering: crispEdges; }
.pointer { fill: #00ffc0; }

.stroke {
  fill: none;
  stroke-width: 3;
  stroke-linejoin: round;
}

.stroke.thin { stroke-width: 2; }
.stroke.thick { stroke-width: 4; }
.stroke.red { stroke: #f00; }
.stroke.cyan { stroke: #00ccff; }
.stroke.yellow { stroke: #ff0; }
.stroke.blue { stroke: #668cff; }

.vol { fill: #f00; shape-rendering: crispEdges; }
.vol.up { fill: #339966; }

.limit { stroke-width: 2; stroke-dasharray: 6 2; shape-rendering: crispEdges; }
.limit.upper { stroke: #f00; }
.limit.lower { stroke: #339966; }

.scroller {
  display: flex;
  flex: none;
  height: 14px;
  background: #eee;
}

.arrow { width: 14px; height: 14px; }
.arrow svg { display: block; fill: #111; }
.track { flex: 611; }
.thumb { flex: 523; background: #b3b3b3; }

.boxsize {
  flex: none;
  height: 24px;
  padding: 0 22px 0 0;
  box-sizing: border-box;
  background: #e1e1e1;
  color: #222;
  line-height: 28px;
  text-align: right;
}

.boxsize b { margin: 0 2px; }
.boxsize sup { font-size: 10px; line-height: 1px; }

.pf-chart {
  flex: 1;
  display: block;
  width: 100%;
  min-height: 0;
  background: #000;
}

.pf-label {
  fill: #222;
  font-size: 16px;
  font-weight: bold;
}

.pf-label.end { text-anchor: end; }
.pf-label.mid { text-anchor: middle; }

.pf-cell {
  fill: #f00;
  font-size: 12px;
  text-anchor: middle;
}

.pf-cell.up { fill: #0f0; }
.pf-cell.bold { font-weight: bold; }

.signal text { font-size: 12px; font-weight: bold; }
.signal.up { fill: #0f0; stroke: none; }
.signal.up path { stroke: #0f0; }
.signal.last { fill: #ff6600; }
.signal.last path { stroke: #ff6600; }
.signal path { shape-rendering: crispEdges; }
</style>
